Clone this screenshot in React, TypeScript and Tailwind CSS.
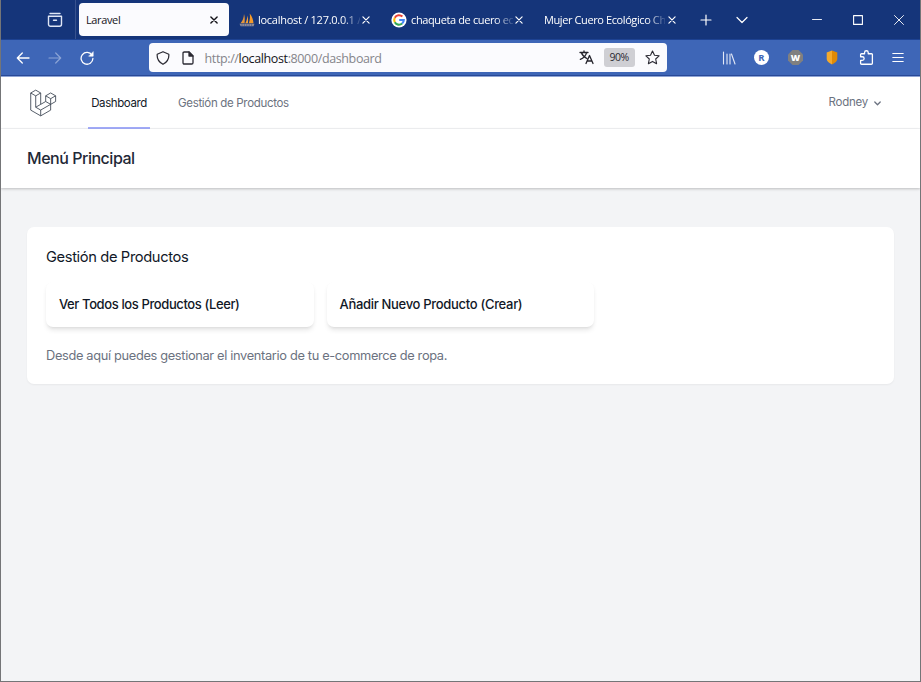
import type { ReactNode } from 'react';

function Svg({ size = 16, vb = 16, sw = 1.3, className = '', children }: { size?: number; vb?: number; sw?: number; className?: string; children: ReactNode }) {
  return (
    <svg width={size} height={size} viewBox={`0 0 ${vb} ${vb}`} fill="none" stroke="currentColor" strokeWidth={sw} strokeLinecap="round" strokeLinejoin="round" className={`block shrink-0 ${className}`}>
      {children}
    </svg>
  );
}

function Close({ sw = 1.2 }: { sw?: number }) {
  return <Svg size={8} vb={8} sw={sw}><path d="M.9.9l6.2 6.2M7.1.9L.9 7.1" /></Svg>;
}

function PhpMyAdminIcon() {
  return (
    <svg width="16" height="16" viewBox="0 0 16 16" className="block shrink-0">
      <path d="M5 2C6 5 5.800 8 5.600 11.300H1.500C3.800 8.500 4.900 5.500 5 2Z" fill="#e8973a" />
      <path d="M8.300 3.500C9.200 6 9.200 8.800 8.900 11.300H6.300C7.700 8.800 8.300 6.300 8.300 3.500Z" fill="#f5a037" />
      <path d="M10.700 1.500c2.500 3 3.600 6.300 3.800 9.800H9.800c1.200-3.500 1.500-6.600.9-9.800Z" fill="#f39a2b" />
      <path d="M.5 11.800h15l-1 2.400H1.700Z" fill="#8f8c98" />
      <path d="M3 12.300v1.500M5.400 12.300v1.500M7.800 12.300v1.500M10.200 12.300v1.500M12.600 12.300v1.500" stroke="#40508a" strokeWidth=".8" />
    </svg>
  );
}

function GoogleIcon() {
  return (
    <svg width="16" height="16" viewBox="0 0 16 16" className="block shrink-0">
      <circle cx="8" cy="8" r="7.6" fill="#fff" />
      <g fill="none" strokeWidth="2.1">
        <path d="M11.4 4.6A4.8 4.8 0 0 0 3.8 5.7" stroke="#ea4335" />
        <path d="M3.8 5.7a4.8 4.8 0 0 0 0 4.6" stroke="#fbbc05" />
        <path d="M3.8 10.3a4.8 4.8 0 0 0 7.3 1.2" stroke="#34a853" />
        <path d="M11.1 11.5A4.8 4.8 0 0 0 12.8 8H8.2" stroke="#4285f4" />
      </g>
    </svg>
  );
}

function LaravelLogo() {
  return (
    <svg width="30" height="30" viewBox="0 0 316 316" fill="none" stroke="#3a4350" strokeWidth="9" strokeLinejoin="round" className="block shrink-0">
      <path d="M91.8 22.4L144.2 52.6L91.8 82.8L39.3 52.6ZM249.1 52.1L301.6 82.3L249.1 112.5L196.7 82.3ZM39.3 52.6V233L144.2 293.5L249.1 233V172.3M144.2 293.5V232.3M144.2 52.6V172.3L91.8 202.5V82.8M91.8 202.5L144.2 232.3L301.6 142.2V82.3M196.7 82.3V142.2L144.2 172.3M196.7 142.2L249.1 172.3V112.5" />
    </svg>
  );
}

const fade = '[mask-image:linear-gradient(to_right,#000_calc(100%-18px),rgba(0,0,0,0.15))]';

function TabBar() {
  return (
    <div className="flex h-10 items-center border-b border-[#1d4292] bg-[#15357a] text-[11px] text-white">
      <div className="flex h-full w-[75px] items-center border-r border-[#38528e] pl-[46px]">
        <Svg size={16} sw={1.4} className="text-[#dfe6f5]">
          <path d="M3 1.500h10M1.500 4.300h13v8a2 2 0 0 1-2 2h-9a2 2 0 0 1-2-2ZM6.500 8.300h3" />
        </Svg>
      </div>
      <div className="ml-[3px] flex h-[33px] w-[150px] items-center justify-between rounded-[4px] bg-[#fbfbfe] pt-px pr-[11px] pl-[7px] text-[#15141a]">
        <span className="tracking-[-0.37px]">Laravel</span>
        <Close sw={1.4} />
      </div>
      <div className="ml-[10px] flex w-[132px] items-center pt-px">
        <PhpMyAdminIcon />
        <span className={`ml-[3px] w-[102px] whitespace-nowrap tracking-[-0.27px] ${fade}`}>localhost / 127.0.0.1 /</span>
        <span className="ml-[2px]"><Close /></span>
      </div>
      <div className="ml-[20px] flex w-[133px] items-center pt-px">
        <GoogleIcon />
        <span className={`ml-[4px] w-[102px] whitespace-nowrap tracking-[-0.38px] ${fade}`}>chaqueta de cuero ec</span>
        <span className="ml-[2px]"><Close /></span>
      </div>
      <div className="ml-[20px] flex w-[133px] items-center pt-px">
        <span className={`w-[121px] whitespace-nowrap tracking-[-0.4px] ${fade}`}>Mujer Cuero Ecológico Ch</span>
        <span className="ml-[3px]"><Close /></span>
      </div>
      <Svg size={12} vb={12} sw={1.2} className="ml-[23px]"><path d="M6 1v10M1 6h10" /></Svg>
      <Svg size={12} vb={12} sw={1.2} className="ml-[24px]"><path d="M1 3.500l5 5 5-5" /></Svg>
      <Svg size={10} vb={10} sw={0.9} className="ml-[64px]"><path d="M.5 4.500h9" /></Svg>
      <Svg size={10} vb={10} sw={1.1} className="ml-[31px]"><path d="M.6.6h8.8v8.800H.6z" /></Svg>
      <Svg size={10} vb={10} sw={0.9} className="ml-[31px]"><path d="M.5.5l9 9M9.500.5l-9 9" /></Svg>
    </div>
  );
}

function Toolbar() {
  return (
    <div className="border-b border-[#8ea4d5]">
      <div className="flex h-[36px] items-center border-b border-[#284997] bg-[#3e66b7] text-white">
        <Svg size={14} vb={14} sw={1.3} className="ml-[14.500px]"><path d="M13 7H1.300M6.300 2l-5 5 5 5" /></Svg>
        <Svg size={14} vb={14} sw={1.2} className="ml-[18.500px] text-[#8ba3d5]"><path d="M1 7h11.700M7.700 2l5 5-5 5" /></Svg>
        <Svg size={14} vb={14} sw={1.3} className="ml-[18px]">
          <path d="M12 4.200A5.900 5.900 0 1 0 12.900 7.500" /><path d="M13.200 1v4.200H9Z" fill="currentColor" strokeWidth="0.6" />
        </Svg>
        <div className="ml-[54.500px] flex h-[29px] w-[518.500px] items-center rounded-[4px] bg-[#fbfbfe] text-[#2b2a33]">
          <Svg size={14} vb={14} sw={1.2} className="ml-[7.500px]"><path d="M7 .7l5.800 2.500c.4 4.300-1.700 8-5.800 10.100C2.900 11.200.8 7.500 1.200 3.200Z" /></Svg>
          <Svg size={14} vb={14} sw={1.3} className="ml-[11px]">
            <path d="M2 2.300Q2 1 3.300 1H8l4 4v6.700q0 1.300-1.300 1.300H3.300Q2 13 2 11.700Z" /><path d="M8 1v4h4Z" fill="currentColor" />
          </Svg>
          <div className="ml-[9.500px] w-[374px] pt-[3px] text-[12.500px] leading-none tracking-[-0.37px] text-[#85858b]">
            http://<span className="text-[#15141a]">localhost</span>:8000/dashboard
          </div>
          <Svg size={15} vb={15} sw={1.3} className="text-[#24232b]">
            <path d="M1 2.500h8M5 1v1.500M2.500 2.800c.7 2.500 2.800 4.300 5.300 5.700M7.500 2.800C6.800 5.500 4.500 8 1.300 9.300M7 13.500l3.500-8 3.500 8M8.300 11h4.500" />
          </Svg>
          <div className="ml-[10px] flex h-[19px] w-[31px] items-center justify-center rounded-[3px] bg-[#cfcfd4] pt-px text-[10.500px] tracking-[-0.5px]">90%</div>
          <Svg size={15} vb={15} sw={1.1} className="ml-[10.500px]"><path d="M7.500 1l2 4.200 4.600.6-3.400 3.200.9 4.700-4.100-2.300-4.100 2.300.9-4.700L.9 5.800l4.600-.6Z" /></Svg>
        </div>
        <Svg size={14} vb={14} sw={1.1} className="ml-[55px] text-[#e3e9f7]"><path d="M1.500 1v12M5 3v10M8 3v10M9.500 3l3.500 10" /></Svg>
        <div className="ml-[18px] flex h-[15px] w-[15px] items-center justify-center rounded-full bg-white text-[9.500px] leading-none font-bold text-[#3e66b7]">R</div>
        <div className="ml-[19px] flex h-[15px] w-[15px] items-center justify-center bg-[#808080] text-[9px] leading-none font-extrabold text-white [clip-path:polygon(30%_0,70%_0,100%_30%,100%_70%,70%_100%,30%_100%,0_70%,0_30%)]">W</div>
        <svg width="12" height="15" viewBox="0 0 12 15" className="ml-[23px] block shrink-0">
          <path d="M6 .5L.7 2.500v6.500c0 2 2.200 4.100 5.300 5.500Z" fill="#f5aa2c" /><path d="M6 .5l5.300 2v6.500c0 2-2.200 4.100-5.300 5.500Z" fill="#e08a06" />
        </svg>
        <Svg size={15} vb={14} sw={1.2} className="ml-[21px]">
          <path d="M1.500 12V9.700h1.600a1.700 1.700 0 0 0 0-3.400H1.500V4.300q0-.8.8-.8h2.900V2.400a1.700 1.700 0 0 1 3.400 0v1.100h3.100q.8 0 .8.800v8q0 1-1 1h-9q-1 0-1-1Z" />
        </Svg>
        <Svg size={12} vb={12} sw={1.1} className="ml-[18px]"><path d="M.8 1.500h10.400M.8 5.500h10.400M.8 9.500h10.400" /></Svg>
      </div>
    </div>
  );
}

function ActionCard({ children }: { children: ReactNode }) {
  return (
    <a className="flex h-[44.500px] w-[267.500px] items-center rounded-[7px] bg-white pl-[13px] text-[13px] font-medium text-[#111827] shadow-[0_3.600px_5.400px_-1px_rgba(0,0,0,0.1),0_1.800px_3.600px_-2px_rgba(0,0,0,0.1)]">
      {children}
    </a>
  );
}

export default function App() {
  return (
    <div className="flex h-[682px] w-[921px] flex-col overflow-hidden border-x border-b border-[#747577] bg-[#f3f4f6] font-['Open_Sans','Noto_Sans',sans-serif]">
      <TabBar />
      <Toolbar />
      <div className="flex flex-1 flex-col font-['Inter',sans-serif]">
        <nav className="flex h-[52px] items-stretch border-b border-[#f3f4f6] bg-white pr-[39px] pl-[25.500px] text-[11.500px] text-[#6b7280]">
          <div className="flex w-[61.500px] items-center"><LaravelLogo /></div>
          <a className="-mb-px flex w-[62px] items-center justify-center border-b-2 border-[#a3acf9] pt-[4px] text-[#111827]"><span className="tracking-[-0.42px]">Dashboard</span></a>
          <a className="ml-[28px] flex items-center pt-[3px]"><span className="tracking-[-0.32px]">Gestión de Productos</span></a>
          <div className="ml-auto flex items-center gap-[6px] pt-px">
            <span className="tracking-[-0.25px]">Rodney</span>
            <Svg size={7} vb={7} sw={1.3}><path d="M.8 2l2.700 2.700L6.200 2" /></Svg>
          </div>
        </nav>
        <header className="flex h-[59px] items-center bg-white pl-[26px] shadow-[0_1px_3px_rgba(0,0,0,0.16),0_1px_2px_rgba(0,0,0,0.08)]">
          <h2 className="-mt-px text-[16px] font-medium tracking-[-0.47px] text-[#1f2937]">Menú Principal</h2>
        </header>
        <main className="mx-[26px] mt-[39px] h-[157px] rounded-[7px] bg-white px-[19px] pt-[18px] shadow-[0_1px_2px_rgba(0,0,0,0.05)]">
          <h3 className="h-[24px] text-[14.700px] leading-[24px] tracking-[-0.37px] text-[#111827]">Gestión de Productos</h3>
          <div className="mt-[13px] flex gap-[13px]">
            <ActionCard><span className="tracking-[-0.39px]">Ver Todos los Productos (Leer)</span></ActionCard>
            <ActionCard><span className="tracking-[-0.31px]">Añadir Nuevo Producto (Crear)</span></ActionCard>
          </div>
          <p className="mt-[18.500px] text-[12.800px] leading-[22px] tracking-[-0.33px] text-[#6b7280]">Desde aquí puedes gestionar el inventario de tu e-commerce de ropa.</p>
        </main>
      </div>
    </div>
  );
}
